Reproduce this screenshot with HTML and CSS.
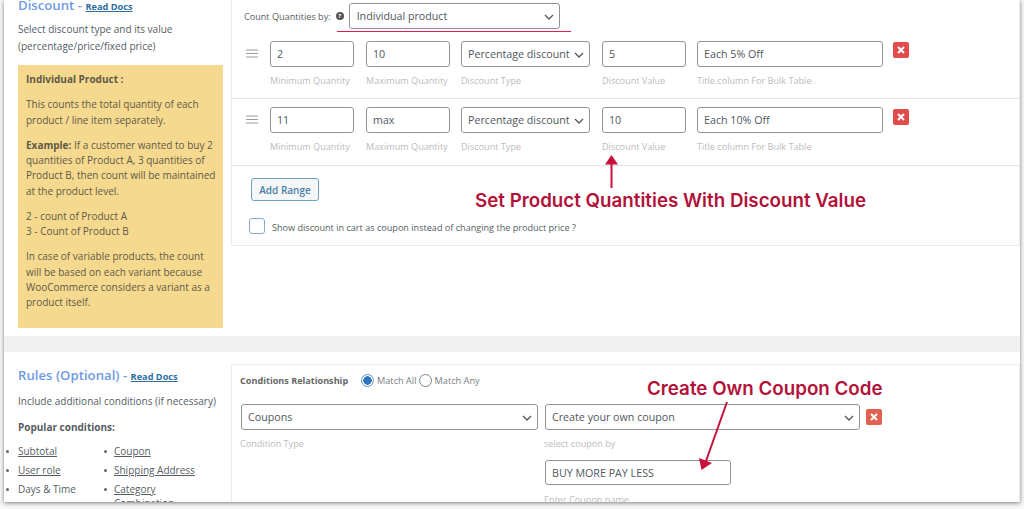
FILE: index.html
```html
<!DOCTYPE html>
<html lang="en">
<head>
<meta charset="utf-8">
<title>Discount rules</title>
<link rel="stylesheet" href="styles.css">
</head>
<body>
<div class="panel">
  <section class="sec sec-discount">
    <aside class="side">
      <h2 class="title">Discount - <a class="docs" href="#">Read Docs</a></h2>
      <p class="lead">Select discount type and its value (percentage/price/fixed price)</p>
      <div class="note">
        <p><b>Individual Product :</b></p>
        <p>This counts the total quantity of each product / line item separately.</p>
        <p><b>Example:</b> If a customer wanted to buy 2 quantities of Product A, 3 quantities of Product B, then count will be maintained at the product level.</p>
        <p>2 - count of Product A<br>3 - Count of Product B</p>
        <p>In case of variable products, the count will be based on each variant because WooCommerce considers a variant as a product itself.</p>
      </div>
    </aside>
    <div class="card card-top">
      <div class="count">
        <span class="count-label">Count Quantities by:</span>
        <span class="help">?</span>
        <div class="select select-count">Individual product<svg class="chev" viewBox="0 0 10 6"><path d="M1 1l4 4 4-4"/></svg></div>
      </div>
      <div class="row">
        <svg class="drag" viewBox="0 0 12 9"><path d="M0 1h12M0 4.500h12M0 8h12"/></svg>
        <div class="f f-q"><div class="input">2</div><label>Minimum Quantity</label></div>
        <div class="f f-q"><div class="input">10</div><label>Maximum Quantity</label></div>
        <div class="f f-t"><div class="select">Percentage discount<svg class="chev" viewBox="0 0 10 6"><path d="M1 1l4 4 4-4"/></svg></div><label>Discount Type</label></div>
        <div class="f f-q"><div class="input">5</div><label>Discount Value</label></div>
        <div class="f f-l"><div class="input">Each 5% Off</div><label>Title column For Bulk Table</label></div>
        <span class="del"><svg viewBox="0 0 16 16"><path d="M5 5l6 6M11 5l-6 6"/></svg></span>
      </div>
      <div class="row">
        <svg class="drag" viewBox="0 0 12 9"><path d="M0 1h12M0 4.500h12M0 8h12"/></svg>
        <div class="f f-q"><div class="input">11</div><label>Minimum Quantity</label></div>
        <div class="f f-q"><div class="input">max</div><label>Maximum Quantity</label></div>
        <div class="f f-t"><div class="select">Percentage discount<svg class="chev" viewBox="0 0 10 6"><path d="M1 1l4 4 4-4"/></svg></div><label>Discount Type</label></div>
        <div class="f f-q"><div class="input">10</div><label>Discount Value</label></div>
        <div class="f f-l"><div class="input">Each 10% Off</div><label>Title column For Bulk Table</label></div>
        <span class="del"><svg viewBox="0 0 16 16"><path d="M5 5l6 6M11 5l-6 6"/></svg></span>
      </div>
      <button class="add" type="button">Add Range</button>
      <div class="check"><span class="box"></span><span class="check-text">Show discount in cart as coupon instead of changing the product price ?</span></div>
    </div>
  </section>
  <div class="band"></div>
  <section class="sec sec-rules">
    <aside class="side">
      <h2 class="title">Rules (Optional) - <a class="docs" href="#">Read Docs</a></h2>
      <p class="lead">Include additional conditions (if necessary)</p>
      <p class="pop"><b>Popular conditions:</b></p>
      <div class="lists">
        <ul>
          <li><a href="#">Subtotal</a></li>
          <li><a href="#">User role</a></li>
          <li>Days &amp; Time</li>
        </ul>
        <ul>
          <li><a href="#">Coupon</a></li>
          <li><a href="#">Shipping Address</a></li>
          <li><a href="#">Category Combination</a></li>
        </ul>
      </div>
    </aside>
    <div class="card card-rules">
      <div class="rel">
        <b class="rel-label">Conditions Relationship</b>
        <span class="radio on"></span><span>Match All</span>
        <span class="radio"></span><span>Match Any</span>
      </div>
      <div class="cond">
        <div class="f f-c1"><div class="select">Coupons<svg class="chev" viewBox="0 0 10 6"><path d="M1 1l4 4 4-4"/></svg></div><label>Condition Type</label></div>
        <div class="f f-c2">
          <div class="select">Create your own coupon<svg class="chev" viewBox="0 0 10 6"><path d="M1 1l4 4 4-4"/></svg></div><label class="lbl-by">select coupon by</label>
          <div class="input input-name">BUY MORE PAY LESS</div><label class="lbl-name">Enter Coupon name</label>
        </div>
        <span class="del del-soft"><svg viewBox="0 0 16 16"><path d="M5 5l6 6M11 5l-6 6"/></svg></span>
      </div>
    </div>
  </section>
  <div class="mark mark-underline"></div>
  <div class="mark note-a">Set Product Quantities With Discount Value</div>
  <div class="mark note-b">Create Own Coupon Code</div>
  <svg class="mark arrows" viewBox="0 0 1024 509">
    <path d="M611.500 188V163"/><path class="head" d="M611.500 155l6.500 9.500h-13z"/>
    <path d="M727 402L706 461"/><path class="head" d="M701.500 470L699 458l13 5z"/>
  </svg>
</div>
</body>
</html>
```
FILE: styles.css
```css
* { box-sizing: border-box; }
html, body { margin: 0; height: 509px; overflow: hidden; background: #f7f7f7; }
body { padding: 0 4px 7px; font-family: "Open Sans", "Noto Sans", sans-serif; font-size: 10px; color: #555d63; }
.panel { position: relative; height: 502px; overflow: hidden; background: #fff; box-shadow: 0 1px 4px rgba(60,60,60,.65); }
.sec { display: flex; align-items: flex-start; }
.sec-discount { height: 336px; }
.sec-rules { height: 150px; padding-top: 12px; }
.band { height: 16px; background: #f0f0f1; }
.side { width: 227px; flex: none; padding-left: 14px; }
.title { margin: 0; font-size: 13.200px; line-height: 16px; font-weight: 600; color: #6f9be6; }
.sec-discount .title { margin-top: -3px; }
.sec-rules .title { margin-top: 3px; }
.docs { font-size: 9.200px; font-weight: 700; color: #2f6f9f; text-decoration: underline; }
.lead { margin: 8px 0 0; font-size: 10px; line-height: 16px; width: 205px; }
.sec-discount .lead { margin-top: 6px; line-height: 16.500px; }
.note { margin-top: 11px; width: 205px; height: 263px; padding: 7px 2px 7px 8px; background: #f5d98f; font-size: 10px; line-height: 15.250px; color: #5f5a47; }
.note p { margin: 0 0 10px; }
.pop { margin: 10px 0 0; font-size: 10px; line-height: 16px; }
.lists { display: flex; margin-top: 9px; }
.lists ul { margin: 0; padding: 0; list-style: none; }
.lists ul:first-child { width: 96px; flex: none; }
.lists ul:last-child { width: 90px; }
.lists li { position: relative; margin-bottom: 5px; line-height: 14px; font-size: 10px; }
.lists li::before { content: ""; position: absolute; left: -12px; top: 6px; width: 3px; height: 3px; border-radius: 50%; background: #666; }
.lists ul:last-child li::before { left: -10px; }
.lists a { color: #555d63; }
.card { flex: 1; background: #fff; border: 1px solid #ececec; }
.card-top { height: 247px; margin-top: -1px; padding-top: 3px; }
.count { display: flex; align-items: center; height: 26px; padding-left: 12px; }
.count-label { font-size: 9.100px; }
.help { display: inline-flex; align-items: center; justify-content: center; width: 8px; height: 8px; margin: 0 5px 0 5px; border-radius: 50%; background: #555; color: #fff; font-size: 6px; font-weight: 700; }
.select, .input { display: flex; align-items: center; height: 26px; padding: 0 6px; border: 1px solid #8f9499; border-radius: 3px; background: #fff; font-size: 10.700px; color: #50575e; white-space: nowrap; }
.select { position: relative; }
.chev { position: absolute; right: 5px; top: 10px; width: 10px; height: 6px; fill: none; stroke: #50575e; stroke-width: 1.300; }
.select-count { width: 211px; padding: 0 7px; }
.row { display: flex; align-items: flex-start; gap: 12px; height: 70px; padding: 12px 0 0 14px; border-bottom: 1px solid #e4e4e4; }
.row + .row { height: 67px; padding-top: 8px; }
.row + .row .del { margin-top: 2px; }
.drag { width: 12px; height: 9px; margin: 8px 0 0 0; fill: none; stroke: #9a9a9a; stroke-width: 1; flex: none; }
.f { flex: none; }
.f label { display: block; margin-top: 8px; font-size: 9.100px; line-height: 12px; color: #bcbcbc; }
.f-q { width: 84px; }
.f-t { width: 129px; margin-left: -1px; }
.f-l { width: 186px; margin-left: -1px; }
.del { display: flex; flex: none; width: 16px; height: 16px; margin: 1px 0 0 -2px; border-radius: 2px; background: #e04c4c; }
.del svg { width: 16px; height: 16px; fill: none; stroke: #fff; stroke-width: 2; }
.add { display: block; width: 68px; height: 23px; margin: 12px 0 0 19px; padding: 0; border: 1px solid #6e9fc6; border-radius: 3px; background: #f6f7f7; font: 600 10px "Open Sans", sans-serif; color: #4b7ea8; }
.check { display: flex; align-items: center; gap: 7px; margin: 17px 0 0 17px; font-size: 9.100px; }
.check-text { padding-top: 2px; }
.box { width: 16px; height: 16px; flex: none; border: 1px solid #88a9cf; border-radius: 3px; background: #fff; }
.card-rules { height: 150px; padding: 8px 0 0 8px; }
.rel { display: flex; align-items: center; gap: 2px; height: 14px; font-size: 9.200px; color: #7a7f84; }
.rel-label { width: 119px; font-size: 9.100px; color: #666; }
.radio { width: 13px; height: 13px; margin-right: 1px; border: 1px solid #7f8489; border-radius: 50%; background: #fff; }
.radio.on { border-color: #5e93c8; background: radial-gradient(circle, #2f74c0 0 4px, #fff 4.500px); }
.cond { display: flex; gap: 7px; margin: 17px 0 0 1px; }
.f-c1 { width: 297px; }
.f-c2 { width: 315px; }
.cond .f label { margin: 8px 0 8px -1px; }
.cond .f .lbl-by { margin-bottom: 10px; }
.cond .f .lbl-name { margin-top: 9px; }
.input-name { width: 186px; height: 25px; }
.del-soft { margin: 5px 0 0 -1px; background: #e2604f; }
.mark { position: absolute; }
.mark-underline { left: 333px; top: 31px; width: 234px; height: 1px; background: #e0204f; }
.note-a { left: 471px; top: 190px; font: 600 18.750px/22px Inter, sans-serif; color: #b2123a; white-space: nowrap; }
.note-b { left: 643px; top: 378px; font: 600 18.750px/22px Inter, sans-serif; color: #b2123a; white-space: nowrap; }
.arrows { left: -4px; top: 0; width: 1024px; height: 509px; fill: none; stroke: #c8103c; stroke-width: 2; pointer-events: none; }
.arrows .head { fill: #c8103c; stroke: none; }
```
